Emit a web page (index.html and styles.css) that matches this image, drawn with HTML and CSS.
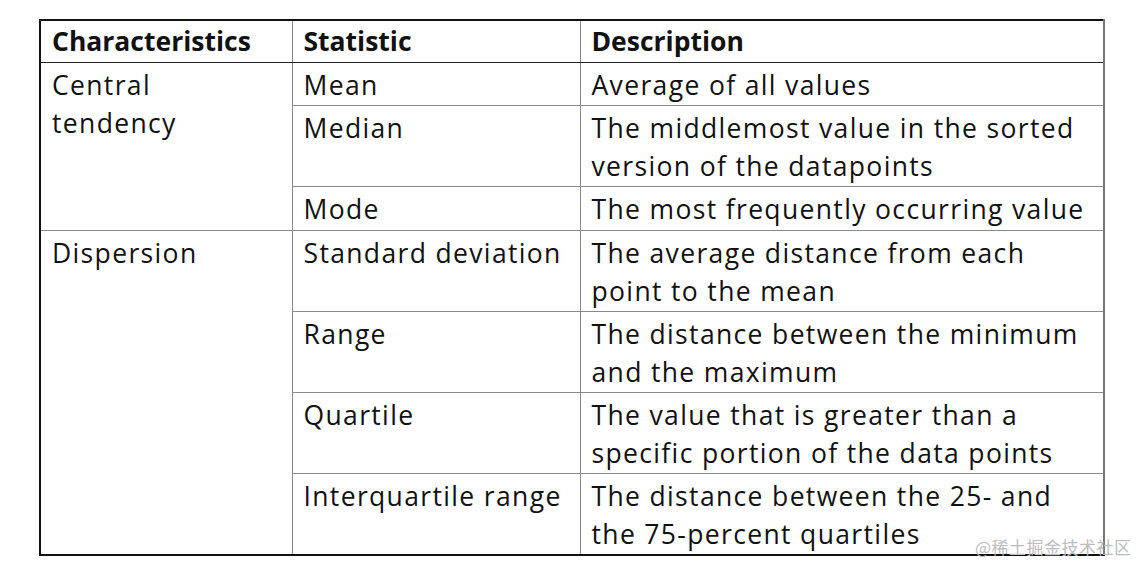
FILE: index.html
```html
<!DOCTYPE html>
<html>
<head>
<meta charset="utf-8">
<link rel="stylesheet" href="styles.css">
</head>
<body>
<div class="page">
<table class="stats">
  <colgroup>
    <col class="c1"><col class="c2"><col class="c3">
  </colgroup>
  <thead>
    <tr><th>Characteristics</th><th>Statistic</th><th>Description</th></tr>
  </thead>
  <tbody>
    <tr><td rowspan="3" class="group">Central<br>tendency</td><td>Mean</td><td>Average of all values</td></tr>
    <tr><td>Median</td><td>The middlemost value in the sorted<br>version of the datapoints</td></tr>
    <tr class="tall"><td>Mode</td><td>The most frequently occurring value</td></tr>
    <tr><td rowspan="4" class="group last">Dispersion</td><td>Standard deviation</td><td>The average distance from each<br>point to the mean</td></tr>
    <tr><td>Range</td><td>The distance between the minimum<br>and the maximum</td></tr>
    <tr><td>Quartile</td><td>The value that is greater than a<br>specific portion of the data points</td></tr>
    <tr class="lastrow"><td>Interquartile range</td><td>The distance between the 25- and<br>the 75-percent quartiles</td></tr>
  </tbody>
</table>
<div class="watermark">@稀土掘金技术社区</div>
</div>
</body>
</html>
```
FILE: styles.css
```css
html, body {
  margin: 0;
  padding: 0;
  background: #fff;
}
.page {
  position: relative;
  width: 1140px;
  height: 564px;
  padding: 19px 0 0 39px;
  box-sizing: border-box;
}
.stats {
  border-collapse: collapse;
  font-family: "Open Sans", "Noto Sans", sans-serif;
  font-size: 26.5px;
  line-height: 38px;
  color: #111;
  table-layout: fixed;
  width: 1066px;
  border-top: 2px solid #111;
  border-left: 2px solid #111;
  border-bottom: 2px solid #111;
  border-right: 2px solid #777;
}
.c1 { width: 252px; }
.c2 { width: 288px; }
.c3 { width: 524px; }
.stats th, .stats td {
  border: 1px solid #8a8a8a;
  padding: 3px 11px 1px 11px;
  text-align: left;
  vertical-align: top;
  white-space: nowrap;
  letter-spacing: 1.35px;
}
.stats tr.tall td {
  padding-bottom: 2px;
}
.stats th {
  font-weight: 700;
  letter-spacing: 0;
  padding: 1px 11px 2px 11px;
  border-bottom: 1px solid #222;
}
.stats tr.lastrow td, .stats td.last {
  border-bottom: 2px solid #111;
}
.watermark {
  position: absolute;
  left: 975px;
  top: 535px;
  font-family: "Noto Sans CJK SC", sans-serif;
  font-size: 17px;
  line-height: 24px;
  color: #bdbdbd;
  letter-spacing: 0.5px;
}
```
